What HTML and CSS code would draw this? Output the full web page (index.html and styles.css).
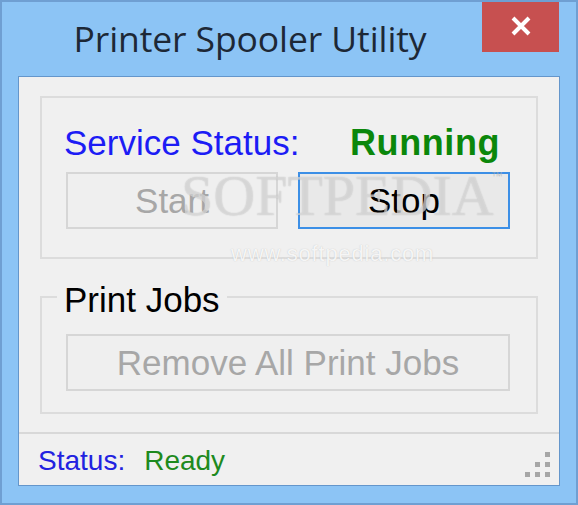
FILE: index.html
```html
<!DOCTYPE html>
<html>
<head>
<meta charset="utf-8">
<link rel="stylesheet" href="styles.css">
</head>
<body>
<div class="window">
  <div class="titlebar">
    <div class="title">Printer Spooler Utility</div>
    <div class="close">
      <svg width="22" height="20" viewBox="0 0 22 20"><path d="M3 2 L19 18 M19 2 L3 18" stroke="#fff" stroke-width="4" fill="none"/></svg>
    </div>
  </div>
  <div class="client">
    <div class="main">
      <div class="group service">
        <div class="status-row">
          <span class="label">Service Status:</span>
          <span class="running">Running</span>
        </div>
        <div class="btn-row">
          <div class="btn disabled">Start</div>
          <div class="btn focused">Stop</div>
        </div>
      </div>
      <fieldset class="group jobs">
        <legend>Print Jobs</legend>
        <div class="btn disabled wide">Remove All Print Jobs</div>
      </fieldset>
      <div class="watermark">
        <span class="wm-big">SOFTPEDIA</span><span class="wm-tm">™</span>
        <span class="wm-url">www.softpedia.com</span>
      </div>
    </div>
    <div class="statusbar">
      <span class="st-label">Status:</span>
      <span class="st-value">Ready</span>
      <svg class="grip" width="25" height="25" viewBox="0 0 25 25">
        <rect x="20" y="0" width="5" height="5" fill="#a6a6a6"/>
        <rect x="10" y="10" width="5" height="5" fill="#a6a6a6"/>
        <rect x="20" y="10" width="5" height="5" fill="#a6a6a6"/>
        <rect x="0" y="20" width="5" height="5" fill="#a6a6a6"/>
        <rect x="10" y="20" width="5" height="5" fill="#a6a6a6"/>
        <rect x="20" y="20" width="5" height="5" fill="#a6a6a6"/>
      </svg>
    </div>
  </div>
</div>
</body>
</html>
```

FILE: styles.css
```css
html, body {
  margin: 0;
  padding: 0;
}
body {
  width: 578px;
  height: 505px;
  overflow: hidden;
  font-family: "Liberation Sans", Arial, sans-serif;
}
.window {
  width: 578px;
  height: 505px;
  box-sizing: border-box;
  border: 2px solid #6f9fd2;
  background: #8cc4f5;
  padding: 0 16px 17px 16px;
  display: flex;
  flex-direction: column;
}
.titlebar {
  height: 74px;
  display: flex;
  align-items: flex-start;
}
.title {
  flex: 1;
  text-align: center;
  font-family: "Open Sans", "Noto Sans", sans-serif;
  font-size: 35.5px;
  line-height: 48px;
  padding-top: 12px;
  color: #1d2836;
  letter-spacing: -0.1px;
}
.close {
  width: 77px;
  height: 50px;
  margin-right: 1px;
  background: #c75050;
  display: flex;
  align-items: center;
  justify-content: center;
}
.close svg {
  margin-top: -2px;
}
.client {
  flex: 1;
  border: 1px solid #6496cb;
  background: #f0f0f0;
  display: flex;
  flex-direction: column;
}
.main {
  flex: 1;
  position: relative;
  padding: 19px 21px 0 21px;
}
.group {
  border: 2px solid #dcdcdc;
}
.service {
  height: 163px;
  box-sizing: border-box;
  padding: 25px 0 0 22px;
}
.status-row {
  display: flex;
  font-size: 35px;
  line-height: 40px;
}
.label {
  color: #1c1cf5;
  width: 286px;
}
.running {
  color: #0b870b;
  font-weight: bold;
  font-size: 36px;
  letter-spacing: 0.6px;
}
.btn-row {
  display: flex;
  gap: 20px;
  margin-top: 9px;
  padding-left: 2px;
}
.btn {
  width: 212px;
  height: 57px;
  box-sizing: border-box;
  display: flex;
  align-items: center;
  justify-content: center;
  font-size: 35px;
  color: #000;
}
.btn.disabled {
  border: 2px solid #d6d6d6;
  background: #efefef;
  color: #a7a7a7;
}
.btn.focused {
  border: 2px solid #3c8fe6;
  background: #e9e9e9;
  color: #000;
}
.jobs {
  margin: 15px 0 0 0;
  padding: 14px 0 21px 15px;
  min-inline-size: 0;
}
.jobs legend {
  padding: 6px 7px 0 7px;
  font-size: 35px;
  line-height: 40px;
  color: #000;
}
.btn.wide {
  width: 444px;
  margin-left: 9px;
}
.watermark {
  position: absolute;
  left: 0;
  top: 0;
  width: 100%;
  height: 100%;
  pointer-events: none;
}
.wm-big {
  position: absolute;
  left: 162px;
  top: 85px;
  font-family: "Liberation Serif", serif;
  font-size: 58px;
  letter-spacing: 0;
  color: rgba(255, 255, 255, 0.45);
  text-shadow: 0 0 1px rgba(140, 140, 140, 0.6);
}
.wm-tm {
  position: absolute;
  left: 472px;
  top: 92px;
  font-size: 12px;
  color: rgba(170, 170, 170, 0.6);
}
.wm-url {
  position: absolute;
  left: 212px;
  top: 164px;
  font-family: "Liberation Sans", sans-serif;
  font-size: 22px;
  letter-spacing: 0.8px;
  color: rgba(255, 255, 255, 0.85);
  text-shadow: 0 0 1px rgba(150, 150, 150, 0.55);
}
.statusbar {
  position: relative;
  height: 53px;
  box-sizing: border-box;
  border-top: 2px solid #d8d8d8;
  padding: 11px 0 0 19px;
  font-size: 28px;
  line-height: 32px;
  display: flex;
}
.st-label {
  color: #2222e0;
}
.st-value {
  color: #1e8a1e;
  margin-left: 19px;
}
.grip {
  position: absolute;
  right: 9px;
  bottom: 8px;
}
```
